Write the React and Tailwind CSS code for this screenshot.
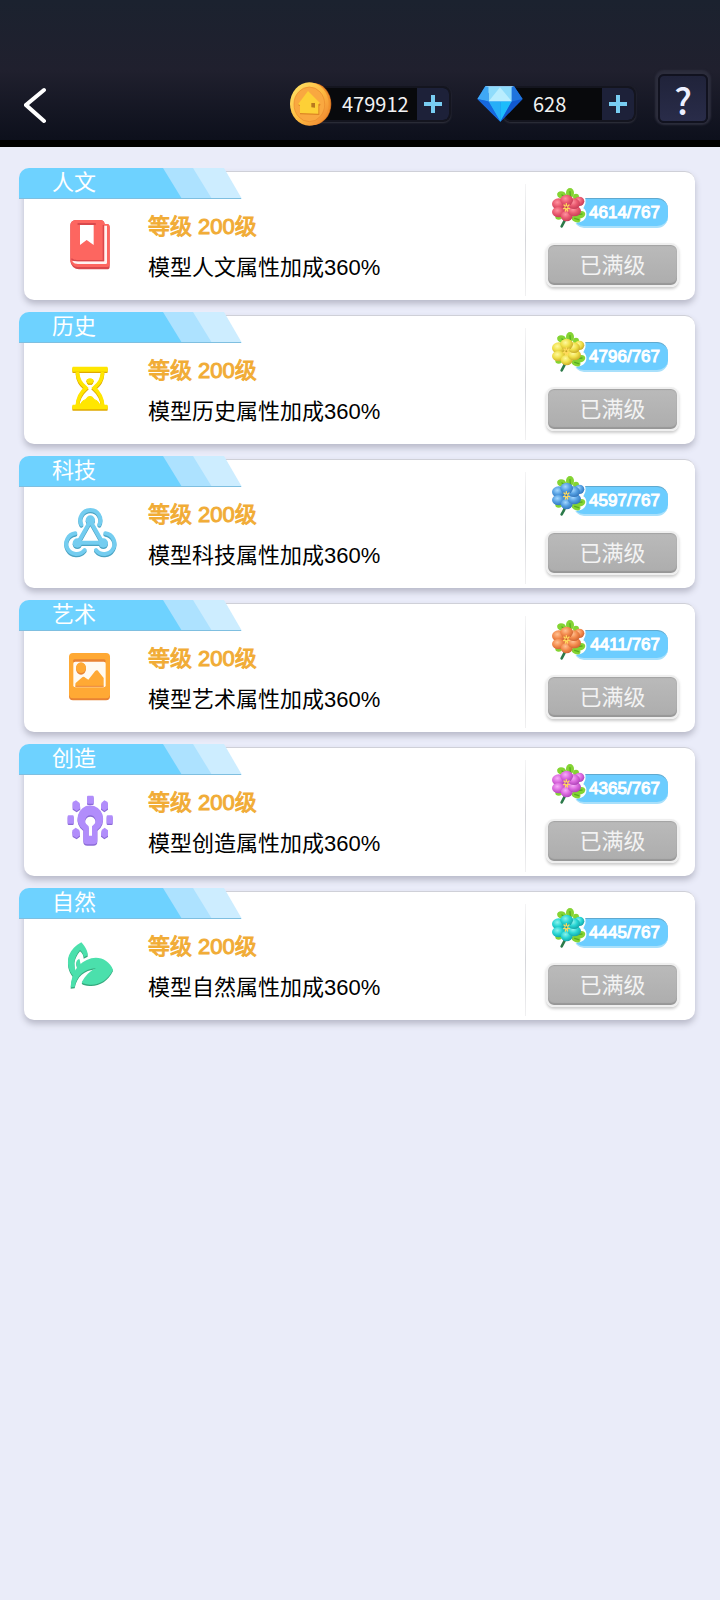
import { useId } from 'react';

function BookIcon() {
  return (
    <svg viewBox="120 147 240 240" className="size-20" aria-hidden="true">
      <path d="M197 195h73a14 14 0 0 1 14 12h8a8 8 0 0 1 7 8v120a8 8 0 0 1-8 8h-84a26 26 0 0 1-26-24V211a16 16 0 0 1 16-16z" fill="#d9484c" />
      <path d="M197 195h73a14 14 0 0 1 14 12h8a8 8 0 0 1 7 8v113a8 8 0 0 1-8 8h-86a22 22 0 0 1-24-22V211a16 16 0 0 1 16-16z" fill="#fd6660" />
      <path d="M190 317c4 5 9 6 14 6h83V212" fill="none" stroke="#fff3f2" strokeWidth="8" strokeLinejoin="round" />
      <path d="M184 311c5 5 10 6 16 6h80V210" fill="none" stroke="#d9484c" strokeWidth="4" />
      <path d="M210 210h41v60l-21-15-20 15z" fill="#fff" />
      <path d="M205 207h50" stroke="#d9484c" strokeWidth="6" strokeLinecap="round" />
    </svg>
  );
}

function HourglassShape({ color }) {
  return (
    <g fill={color} stroke={color}>
      <path d="M69 52h102v11H69zM69 166h102v10H69z" strokeWidth="4" strokeLinejoin="round" />
      <path d="M82 66c2 28 14 36 26 48-14 12-24 28-26 52M158 66c-2 28-14 36-26 48 14 12 24 28 26 52" fill="none" strokeWidth="11" />
      <path d="M110 90c6-5 14-5 20 0l-4 9h-12zM88 167l10-14c6-3 10-4 13-10 5-5 13-5 18 0 3 6 7 7 13 10l10 14z" strokeWidth="3" />
    </g>
  );
}

function HourglassIcon() {
  return (
    <svg viewBox="0 -6 240 240" className="size-20" aria-hidden="true">
      <g transform="translate(0 4)">
        <HourglassShape color="#dfa900" />
      </g>
      <HourglassShape color="#ffe600" />
    </svg>
  );
}

function NetworkShape({ color }) {
  return (
    <g fill="none" stroke={color} strokeLinecap="round">
      <path d="M121 92L84 157h74z" strokeWidth="12" strokeLinejoin="round" />
      <path d="M94 102a30 30 0 1 1 54 0" strokeWidth="12" />
      <path d="M76 129a31 31 0 1 0 28 50" strokeWidth="12" />
      <path d="M166 129a31 31 0 1 1-28 50" strokeWidth="12" />
      <g fill={color} stroke="none">
        <circle cx="121" cy="89" r="14" />
        <circle cx="82" cy="158" r="14" />
        <circle cx="160" cy="158" r="14" />
      </g>
    </g>
  );
}

function NetworkIcon() {
  return (
    <svg viewBox="0 5 240 240" className="size-20" aria-hidden="true">
      <g transform="translate(0 4)">
        <NetworkShape color="#4ba3c3" />
      </g>
      <NetworkShape color="#74cdf0" />
    </svg>
  );
}

function PictureIcon() {
  return (
    <svg viewBox="0 0 240 240" className="size-20" aria-hidden="true">
      <rect x="57" y="56" width="123" height="137" rx="12" fill="#e88233" />
      <rect x="57" y="51" width="123" height="136" rx="12" fill="#ffa934" />
      <path d="M74 75h88" stroke="#e88233" strokeWidth="10" strokeLinecap="round" />
      <rect x="70" y="77" width="97" height="77" rx="6" fill="#fffaf2" />
      <path d="M76 151v-6c0-5 4-6 7-9l12-11c4-4 8-3 11 0l9 6 20-25c4-4 8-4 11 1l15 19v25z" fill="#ffa934" />
      <path d="M76 151h85" stroke="#e88233" strokeWidth="3" />
      <ellipse cx="93" cy="98" rx="15" ry="18" fill="#e88233" />
      <ellipse cx="93" cy="95" rx="15" ry="16" fill="#ffa934" />
    </svg>
  );
}

function BulbShape({ color }) {
  return (
    <g fill={color}>
      <path fillRule="evenodd" d="M120 74a40 40 0 0 1 22 73v32a12 12 0 0 1-12 12h-18a12 12 0 0 1-12-12v-32a40 40 0 0 1 20-73zm1 30a16 16 0 0 0-9 29l4 4v28h10v-28l4-4a16 16 0 0 0-9-29z" />
      <rect x="111" y="45" width="20" height="24" rx="3" />
      <rect x="53" y="104" width="18" height="25" rx="3" />
      <rect x="170" y="104" width="18" height="25" rx="3" />
      <path d="M68 64l10-5 11 8 2 16-11 8-12-8zM173 64l-10-5-9 8-1 16 10 8 11-8zM67 149l10-8 11 7 2 16-10 8-12-7zM174 149l-10-8-9 7-2 16 10 8 11-7z" />
    </g>
  );
}

function BulbIcon() {
  return (
    <svg viewBox="0 -2 240 240" className="size-20" aria-hidden="true">
      <g transform="translate(0 4)">
        <BulbShape color="#8b6bd6" />
      </g>
      <BulbShape color="#b18dfb" />
    </svg>
  );
}

function LeafShape({ color }) {
  return (
    <g fill={color}>
      <path fillRule="evenodd" d="M94 49c13 14 20 28 19 39l-12 6c0-9-4-16-11-22-9 11-16 24-17 36 0 15 3 24 6 31l-3 10-7 1c-14-18-19-39-12-62 7-17 20-30 37-39z" />
      <path d="M88 98c-7 3-10 8-9 15l4 20 11-9z" />
      <path d="M62 184c1-41 23-77 62-87 27-7 55 8 65 34-15 31-42 47-70 45-12-1-20-3-24-7 10-20 25-34 43-43-36 4-57 21-64 57z" />
    </g>
  );
}

function LeafIcon() {
  return (
    <svg viewBox="0 -6 240 240" className="size-20" aria-hidden="true">
      <g transform="translate(0 4)">
        <LeafShape color="#35a87d" />
      </g>
      <LeafShape color="#4be0ac" />
    </svg>
  );
}

function Flower({ petal, shade, light }) {
  const id = useId();
  return (
    <svg viewBox="0 0 180 165" className="absolute left-3.5 top-[9px] w-[60px]" aria-hidden="true">
      <defs>
        <radialGradient id={id} cx=".4" cy=".35" r=".7">
          <stop offset="0" stopColor={light} />
          <stop offset=".5" stopColor={petal} />
          <stop offset="1" stopColor={shade} />
        </radialGradient>
      </defs>
      <path d="M98 42h28c10 2 12 14 10 26l-6 14c10 6 12 20 6 30-6 10-18 14-30 13l-14-12z" fill="#fff" />
      <path d="M76 112c-2 10-6 16-11 24" fill="none" stroke="#2c7a4a" strokeWidth="8" strokeLinecap="round" />
      <g fill="#84d433">
        <ellipse cx="65" cy="42" rx="14" ry="11" transform="rotate(20 65 42)" />
        <ellipse cx="90" cy="36" rx="12" ry="15" />
        <ellipse cx="108" cy="47" rx="9" ry="9" />
        <ellipse cx="121" cy="101" rx="15" ry="11" transform="rotate(-15 121 101)" />
        <ellipse cx="108" cy="114" rx="14" ry="9" transform="rotate(25 108 114)" />
        <ellipse cx="56" cy="108" rx="10" ry="8" />
      </g>
      <path d="M66 42l10 8M90 32l1 14M104 112l12 4M114 101l12-2" stroke="#58ab22" strokeWidth="4" strokeLinecap="round" />
      <g fill={petal}>
        <circle cx="79" cy="80" r="26" />
      </g>
      <g fill={`url(#${id})`}>
        <ellipse cx="118" cy="61" rx="15" ry="14" />
        <ellipse cx="56" cy="69" rx="20" ry="17" />
        <ellipse cx="56" cy="93" rx="20" ry="16" />
        <ellipse cx="80" cy="105" rx="18" ry="16" />
        <ellipse cx="103" cy="90" rx="20" ry="16" />
        <ellipse cx="102" cy="68" rx="18" ry="16" />
        <ellipse cx="80" cy="58" rx="19" ry="17" />
      </g>
      <path d="M79 68v8M72 72l6 6M87 72l-7 6M71 83l7-3M88 83l-8-3M76 90l3-9M83 90l-3-9" stroke="#ffd95c" strokeWidth="4" strokeLinecap="round" />
      <circle cx="79" cy="79" r="3" fill={shade} />
    </svg>
  );
}

function Coin() {
  const id = useId();
  return (
    <svg viewBox="0 0 126 132" className="relative z-10 h-11 w-[42px]" aria-hidden="true">
      <defs>
        <linearGradient id={id} x1="0" y1="0" x2="1" y2="1">
          <stop offset="0" stopColor="#ffe768" />
          <stop offset=".55" stopColor="#fdb840" />
          <stop offset="1" stopColor="#ee8030" />
        </linearGradient>
      </defs>
      <ellipse cx="69" cy="66" rx="55" ry="63" fill="#b85a1c" />
      <ellipse cx="64" cy="66" rx="58" ry="64" fill="#f0922c" />
      <ellipse cx="58" cy="66" rx="58" ry="65" fill={`url(#${id})`} />
      <ellipse cx="58" cy="67" rx="46" ry="52" fill="#f9a840" stroke="#e98b2e" strokeWidth="2" />
      <path d="M54 30l38 38-4 4v27l-58-2V72l-6-3z" fill="#dd8624" />
      <path d="M54 27l36 36-5 4v28l-55-2V69l-6-2z" fill="#fdd036" />
      <path d="M64 63h11v14l-11-1z" fill="#b8791e" />
    </svg>
  );
}

function Diamond() {
  return (
    <svg viewBox="0 0 138 110" className="relative z-10 h-9 w-[46px]" aria-hidden="true">
      <path d="M24 1h88l26 39-68 69L0 40z" fill="#1b6fe6" />
      <path d="M24 1h88l-7 3L70 5 34 22z" fill="#b7ecff" />
      <path d="M34 3h71v44H34z" fill="#8fdcfb" />
      <path d="M69 4l36 43H34z" fill="#b9edfe" />
      <path d="M24 1l10 2v44L0 40z" fill="#3fa8f5" />
      <path d="M112 1l-7 2v44l33-7z" fill="#1f74dd" />
      <path d="M34 47h36v62z" fill="#28aef7" />
      <path d="M105 47H70v62z" fill="#1dbcfb" />
      <path d="M0 40l34 7 36 62z" fill="#1668de" />
      <path d="M138 40l-33 7-35 62z" fill="#1158cf" />
    </svg>
  );
}

function Counter({ icon, value, label, valueClass }) {
  return (
    <div className="flex items-center">
      {icon}
      <div className="-ml-5 flex h-9 items-stretch overflow-hidden rounded-lg border-2 border-[#14151f] bg-[#08090c] shadow-[0_1px_2px_#33343f]">
        <span className={`flex items-center text-xl text-[#f2f2f2] ${valueClass}`}>{value}</span>
        <button type="button" aria-label={label} className="flex w-8 items-center justify-center bg-[#1d2139]">
          <svg viewBox="0 0 18 18" className="size-[18px]" aria-hidden="true">
            <path d="M9 0v18M0 9h18" stroke="#78cdf2" strokeWidth="4" />
          </svg>
        </button>
      </div>
    </div>
  );
}

const attributes = [
  { name: '人文', Icon: BookIcon, count: 4614, petal: '#ea5a70', shade: '#c33a55', light: '#ff93a0' },
  { name: '历史', Icon: HourglassIcon, count: 4796, petal: '#f0e04a', shade: '#c4a526', light: '#fff9a0' },
  { name: '科技', Icon: NetworkIcon, count: 4597, petal: '#549fe2', shade: '#2f72b8', light: '#a5d8ff' },
  { name: '艺术', Icon: PictureIcon, count: 4411, petal: '#f48c4e', shade: '#cb6030', light: '#ffc294' },
  { name: '创造', Icon: BulbIcon, count: 4365, petal: '#db68de', shade: '#a942b4', light: '#f6aef8' },
  { name: '自然', Icon: LeafIcon, count: 4445, petal: '#28d6d4', shade: '#149fa4', light: '#8df3ec' },
];

function Ribbon({ children }) {
  return (
    <div className="absolute -left-[5px] -top-1 h-[31px] w-[223px]">
      <svg viewBox="0 0 223 31" className="absolute inset-0 size-full" aria-hidden="true">
        <path d="M140 0h65l18 31h-65z" fill="#cdedff" />
        <path d="M140 0h34l19 31h-35z" fill="#ade2ff" />
        <path d="M10 0h134l19 31H0V10A10 10 0 0 1 10 0z" fill="#6ed2ff" />
        <path d="M0 30h222v1H0z" fill="#7fbfe0" />
      </svg>
      <h2 className="relative pl-[33px] text-[22px] leading-[30px] text-white">{children}</h2>
    </div>
  );
}

function AttributeCard({ item }) {
  const { name, Icon, count, petal, shade, light } = item;
  return (
    <li className="relative flex h-[129px] rounded-[10px] border-t border-[#cfd0d8] bg-white shadow-[0_4px_6px_#b9bac9]">
      <Ribbon>{name}</Ribbon>
      <div className="ml-[26px] mt-8">
        <Icon />
      </div>
      <div className="ml-[18px] flex-1 pt-[34px] text-[22px] leading-[41px]">
        <p className="text-[#f1ac36] [-webkit-text-stroke:1px_#f1ac36]">等级 200级</p>
        <p className="text-black">模型{name}属性加成360%</p>
      </div>
      <div className="mb-1 mt-3 w-px bg-linear-to-b from-[#f4f4f5] via-[#d5d6da] to-[#f0f0f1]" />
      <div className="relative w-[169px] pl-5 pr-4">
        <div className="ml-7 mt-[26px] flex h-[30px] w-[94px] items-center justify-end rounded-r-[11px] rounded-bl-[10px] border-b-2 border-t border-b-[#a9e0fb] border-t-[#5fa9cf] bg-[#6ccdff] pr-2 text-[17px] text-white [-webkit-text-stroke:1px_#ffffff]">
          {count}/767
        </div>
        <Flower petal={petal} shade={shade} light={light} />
        <button
          type="button"
          className="mt-[15px] flex h-11 w-full items-center justify-center rounded-lg border-2 border-[#efefef] bg-linear-to-b from-[#bababa] to-[#adadad] text-[22px] text-[#f3f3f3] shadow-[0_2px_3px_#cccccc,inset_0_-2px_1px_#979797,inset_0_1px_1px_#a3a3a3]"
        >
          已满级
        </button>
      </div>
    </li>
  );
}

function App() {
  return (
    <div className="min-h-screen bg-[#eaecf9] font-['Liberation_Sans','Noto_Sans_CJK_SC',sans-serif]">
      <header className="flex h-[147px] items-start border-b-[7px] border-black bg-linear-to-b from-[#1b222f] via-[#20202e] to-[#0d101c] pr-3 font-['Noto_Sans_CJK_SC',sans-serif]">
        <button type="button" aria-label="返回" className="ml-6 mt-[87px]">
          <svg viewBox="0 0 24 38" className="h-[38px] w-6" aria-hidden="true">
            <path d="M20 3L2 18l18 16" fill="none" stroke="#fff" strokeWidth="4" strokeLinecap="round" strokeLinejoin="miter" />
          </svg>
        </button>
        <div className="ml-auto mt-[82px] flex h-11 items-center gap-[26px]">
          <Counter icon={<Coin />} value="479912" label="购买金币" valueClass="w-[103px] pl-7" />
          <Counter icon={<Diamond />} value="628" label="购买钻石" valueClass="w-[97px] pl-7" />
        </div>
        <button
          type="button"
          aria-label="帮助"
          className="ml-[22px] mt-[74px] flex h-[49px] w-[50px] items-center justify-center rounded-md border-2 border-[#11121f] bg-linear-to-b from-[#20233a] to-[#292c49] text-4xl font-medium text-[#edf0ff] shadow-[0_-1px_2px_3px_#2c2d3c]"
        >
          ?
        </button>
      </header>
      <main className="pb-6 pl-6 pr-[25px] pt-6">
        <ul className="flex flex-col gap-[15px]">
          {attributes.map((item) => (
            <AttributeCard key={item.name} item={item} />
          ))}
        </ul>
      </main>
    </div>
  );
}

export default App;
